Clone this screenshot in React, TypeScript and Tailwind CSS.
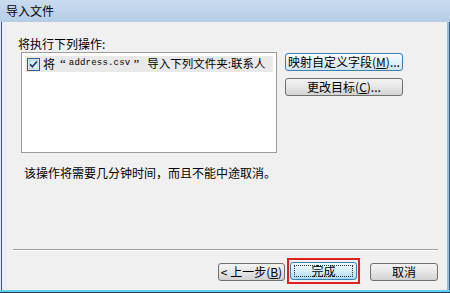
import React from 'react';

const font = { fontFamily: '"Noto Sans CJK SC", "Noto Sans", sans-serif' };
const serif = { fontFamily: '"Liberation Serif", serif' };

function WinButton({
  children,
  className = '',
  focused = false,
  def = false,
}: {
  children: React.ReactNode;
  className?: string;
  focused?: boolean;
  def?: boolean;
}) {
  const border = focused || def ? 'border-[#3c7fb1]' : 'border-[#707070]';
  const fill = def
    ? 'bg-gradient-to-b from-[#eaf6fd] via-[#d9f0fc] to-[#a7d9f5]'
    : focused
      ? 'bg-gradient-to-b from-[#f4f9fd] via-[#e6f1fa] to-[#cfe3f3]'
      : 'bg-gradient-to-b from-[#f4f4f4] via-[#e6e6e6] to-[#d2d2d2]';
  return (
    <div
      className={`h-[18px] border ${border} ${fill} rounded-[3px] flex items-center justify-center text-[12px] leading-none text-black ${className}`}
    >
      {def ? (
        <div className="w-[calc(100%-6px)] h-[12px] border border-dotted border-[#333] flex items-center justify-center">
          {children}
        </div>
      ) : (
        children
      )}
    </div>
  );
}

function CheckBox() {
  return (
    <svg width="13" height="13" viewBox="0 0 13 13" className="shrink-0">
      <defs>
        <linearGradient id="cb" x1="0" y1="0" x2="1" y2="1">
          <stop offset="0" stopColor="#cbe6f8" />
          <stop offset="1" stopColor="#f4fbff" />
        </linearGradient>
      </defs>
      <rect x="0.5" y="0.5" width="12" height="12" fill="#ffffff" stroke="#2a5f8f" />
      <rect x="2" y="2" width="9" height="9" fill="url(#cb)" stroke="#7aa8cc" strokeWidth="0.6" />
      <path d="M3.2 6.4 L5.4 8.8 L9.8 3.6" fill="none" stroke="#1d3f74" strokeWidth="1.7" />
    </svg>
  );
}

export default function App() {
  return (
    <div
      className="w-[450px] h-[293px] flex flex-col overflow-hidden bg-[#2a3b55] select-none"
      style={font}
    >
      {/* Title bar */}
      <div className="h-[22px] shrink-0 flex items-center pl-[6px] text-[12px] text-black bg-gradient-to-b from-[#c9dbef] to-[#b6cde6]">
        导入文件
      </div>

      {/* Frame + body */}
      <div className="flex-1 flex border-b-[2px] border-[#5fd0ea] mb-[1px]">
        <div className="w-[1px] bg-[#dfe8f3]" />
        <div className="w-[1px] bg-[#4a4f7a]" />
        <div className="w-[5px] bg-[#e9eff7]" />

        <div className="flex-1 flex flex-col bg-[#f0f0f0]">
          <div className="mt-[14px] ml-[11px] h-[16px] text-[12px] leading-[16px] text-black">
            将执行下列操作:
          </div>

          <div className="flex">
            <div className="ml-[14px] w-[256px] h-[101px] bg-white border border-[#9c9c9c] p-[3px]">
              <div className="h-[16px] bg-[#e9e9e9] flex items-center pl-[2px] text-[12px] text-black whitespace-nowrap">
                <CheckBox />
                <span className="ml-[3px]">将</span>
                <span className="ml-[5px] text-[13px]" style={serif}>
                  “
                </span>
                <span
                  className="ml-[3px] text-[9px] tracking-[0.2px]"
                  style={{ fontFamily: '"Liberation Mono", monospace' }}
                >
                  address.csv
                </span>
                <span className="ml-[3px] text-[13px]" style={serif}>
                  ”
                </span>
                <span className="ml-[8px] text-[11.5px]">导入下列文件夹:联系人</span>
              </div>
            </div>

            <div className="ml-[8px] mt-[1px] flex flex-col gap-[7px]">
              <WinButton focused className="w-[118px]">
                映射自定义字段(<u>M</u>)...
              </WinButton>
              <WinButton className="w-[118px]">
                更改目标(<u>C</u>)...
              </WinButton>
            </div>
          </div>

          <div className="mt-[12px] ml-[17px] h-[16px] text-[12px] leading-[16px] text-black">
            该操作将需要几分钟时间，而且不能中途取消。
          </div>

          <div className="flex-1" />

          <div className="ml-[6px] mr-[9px] h-[2px] border-t border-t-[#a0a0a0] border-b border-b-white" />

          <div className="h-[39px] flex items-start justify-end mr-[9px] pt-[7px]">
            <WinButton className="w-[67px] mt-[5px]">
              &lt; 上一步(<u>B</u>)
            </WinButton>
            <div className="ml-[2px] border-2 border-[#e0201c] px-[1px] py-[2px]">
              <WinButton def className="w-[67px]">
                完成
              </WinButton>
            </div>
            <WinButton className="w-[68px] ml-[10px] mt-[5px]">取消</WinButton>
          </div>
        </div>

        <div className="w-[2px] bg-[#8cc0e3]" />
        <div className="w-[1px] bg-[#3d5a80]" />
      </div>
    </div>
  );
}
